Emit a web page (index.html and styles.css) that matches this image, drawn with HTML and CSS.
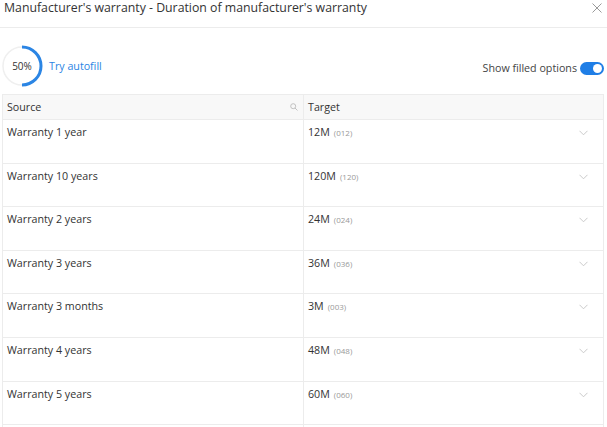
FILE: index.html
```html
<!DOCTYPE html>
<html>
<head>
<meta charset="utf-8">
<link rel="stylesheet" href="styles.css">
</head>
<body>
<div class="dialog">
  <div class="title-bar">
    <div class="title">Manufacturer's warranty - Duration of manufacturer's warranty</div>
    <svg class="close" width="10" height="10" viewBox="0 0 10 10"><path d="M0.5 0.5L9.5 9.5M9.5 0.5L0.5 9.5" stroke="#9a9a9a" stroke-width="1" fill="none"/></svg>
  </div>
  <div class="toolbar">
    <div class="progress">
      <svg width="42" height="42" viewBox="0 0 42 42">
        <circle cx="21" cy="21" r="19" fill="none" stroke="#efefef" stroke-width="1.5"/>
        <path d="M21 2 A19 19 0 0 1 21 40" fill="none" stroke="#2b85e4" stroke-width="3"/>
      </svg>
      <span class="pct">50%</span>
    </div>
    <a class="autofill">Try autofill</a>
    <div class="spacer"></div>
    <span class="show-label">Show filled options</span>
    <span class="toggle"><span class="knob"></span></span>
  </div>
  <div class="table">
    <div class="row head">
      <div class="cell src">Source
        <svg class="search" width="8" height="8" viewBox="0 0 8 8"><circle cx="3.2" cy="3.2" r="2.5" fill="none" stroke="#bbb" stroke-width="0.9"/><path d="M5 5L7.5 7.5" stroke="#bbb" stroke-width="0.9"/></svg>
      </div>
      <div class="cell tgt">Target</div>
    </div>
    <div class="row"><div class="cell src">Warranty 1 year</div><div class="cell tgt"><span class="val">12M</span><span class="code">(012)</span><svg class="chev" width="9" height="6" viewBox="0 0 9 6"><path d="M0.5 0.8L4.5 4.8L8.5 0.8" fill="none" stroke="#c4c4c4" stroke-width="0.9"/></svg></div></div>
    <div class="row"><div class="cell src">Warranty 10 years</div><div class="cell tgt"><span class="val">120M</span><span class="code">(120)</span><svg class="chev" width="9" height="6" viewBox="0 0 9 6"><path d="M0.5 0.8L4.5 4.8L8.5 0.8" fill="none" stroke="#c4c4c4" stroke-width="0.9"/></svg></div></div>
    <div class="row"><div class="cell src">Warranty 2 years</div><div class="cell tgt"><span class="val">24M</span><span class="code">(024)</span><svg class="chev" width="9" height="6" viewBox="0 0 9 6"><path d="M0.5 0.8L4.5 4.8L8.5 0.8" fill="none" stroke="#c4c4c4" stroke-width="0.9"/></svg></div></div>
    <div class="row"><div class="cell src">Warranty 3 years</div><div class="cell tgt"><span class="val">36M</span><span class="code">(036)</span><svg class="chev" width="9" height="6" viewBox="0 0 9 6"><path d="M0.5 0.8L4.5 4.8L8.5 0.8" fill="none" stroke="#c4c4c4" stroke-width="0.9"/></svg></div></div>
    <div class="row"><div class="cell src">Warranty 3 months</div><div class="cell tgt"><span class="val">3M</span><span class="code">(003)</span><svg class="chev" width="9" height="6" viewBox="0 0 9 6"><path d="M0.5 0.8L4.5 4.8L8.5 0.8" fill="none" stroke="#c4c4c4" stroke-width="0.9"/></svg></div></div>
    <div class="row"><div class="cell src">Warranty 4 years</div><div class="cell tgt"><span class="val">48M</span><span class="code">(048)</span><svg class="chev" width="9" height="6" viewBox="0 0 9 6"><path d="M0.5 0.8L4.5 4.8L8.5 0.8" fill="none" stroke="#c4c4c4" stroke-width="0.9"/></svg></div></div>
    <div class="row"><div class="cell src">Warranty 5 years</div><div class="cell tgt"><span class="val">60M</span><span class="code">(060)</span><svg class="chev" width="9" height="6" viewBox="0 0 9 6"><path d="M0.5 0.8L4.5 4.8L8.5 0.8" fill="none" stroke="#c4c4c4" stroke-width="0.9"/></svg></div></div>
    <div class="row"><div class="cell src"></div><div class="cell tgt"></div></div>
  </div>
</div>
</body>
</html>
```
FILE: styles.css
```css
html, body {
  margin: 0;
  padding: 0;
  background: #fff;
  overflow: hidden;
}
body {
  font-family: "Open Sans", "Noto Sans", sans-serif;
  color: #333;
  width: 607px;
  height: 427px;
}
.dialog {
  height: 427px;
  overflow: hidden;
}
.title-bar {
  display: flex;
  align-items: center;
  height: 27px;
  border-bottom: 1px solid #ececec;
  padding: 0 5px 0 4px;
}
.title {
  flex: 1;
  font-size: 12.3px;
  color: #333;
  margin-top: -13px;
}
.close {
  margin-top: -12px;
}
.toolbar {
  display: flex;
  align-items: center;
  height: 56px;
  padding: 10px 3px 0 1px;
}
.progress {
  position: relative;
  width: 42px;
  height: 42px;
}
.progress svg {
  display: block;
}
.pct {
  position: absolute;
  inset: 0;
  display: flex;
  align-items: center;
  justify-content: center;
  font-size: 10px;
  color: #333;
}
.autofill {
  color: #2b85e4;
  font-size: 10.7px;
  margin-left: 6px;
  margin-top: -1px;
}
.spacer { flex: 1; }
.show-label {
  font-size: 10.7px;
  color: #444;
  margin-top: 3px;
}
.toggle {
  width: 24px;
  height: 13px;
  border-radius: 7px;
  background: #1f7ee6;
  margin-left: 3px;
  position: relative;
  margin-top: 5px;
}
.knob {
  position: absolute;
  right: 2px;
  top: 2px;
  width: 9px;
  height: 9px;
  border-radius: 50%;
  background: #fff;
}
.table {
  margin: 0 3px 0 2px;
  border-left: 1px solid #ececec;
  border-right: 1px solid #ececec;
  border-top: 1px solid #ececec;
}
.row {
  display: flex;
  height: 43.6px;
  box-sizing: border-box;
  border-bottom: 1px solid #ececec;
}
.row.head {
  height: 25px;
  background: #f8f8f8;
}
.cell {
  box-sizing: border-box;
  font-size: 10.7px;
  padding: 5px 4px;
  position: relative;
}
.cell.src {
  width: 301px;
  border-right: 1px solid #ececec;
}
.cell.tgt {
  flex: 1;
  display: flex;
  align-items: flex-start;
}
.head .cell {
  padding-top: 5px;
  color: #333;
}
.search {
  position: absolute;
  right: 5px;
  top: 8px;
}
.val {
  color: #333;
}
.code {
  color: #999;
  font-size: 8px;
  margin-left: 4px;
  margin-top: 2px;
}
.chev {
  margin-left: auto;
  margin-right: 11px;
  margin-top: 5px;
}
```
